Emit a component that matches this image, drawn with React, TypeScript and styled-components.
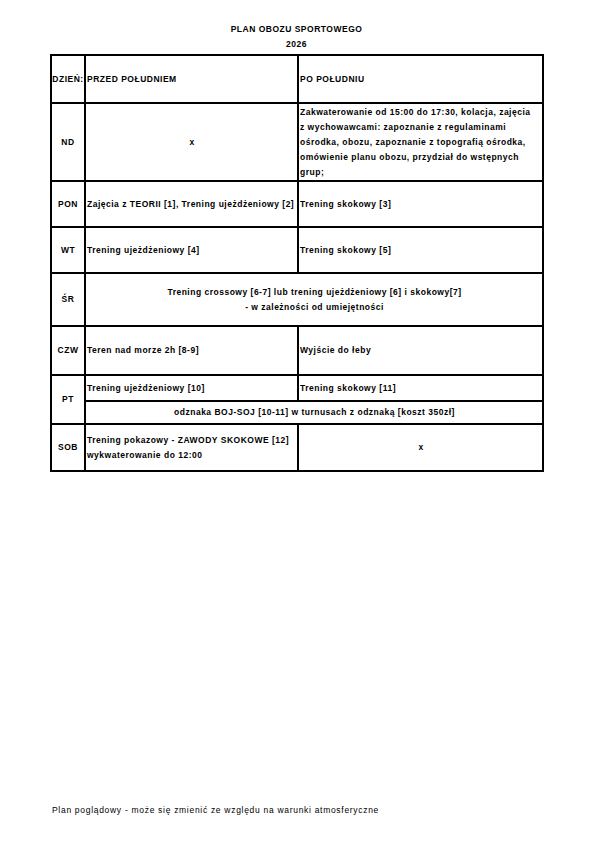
import React from "react";
import styled, {createGlobalStyle} from "styled-components";

const GlobalStyle = createGlobalStyle`
    html, body {
        margin: 0;
        padding: 0;
        background: #ffffff;
    }
`

type Align = "left" | "center";

const Page = () => {
    return <Sheet>
        <GlobalStyle />
        <TitleBlock>
            <TitleLine>PLAN OBOZU SPORTOWEGO</TitleLine>
            <TitleLine>2026</TitleLine>
        </TitleBlock>
        <Table>
            <colgroup>
                <col style={{width: 34}} />
                <col style={{width: 213}} />
                <col style={{width: 245}} />
            </colgroup>
            <tbody>
                <Row h={48}>
                    <DayCell>DZIEŃ:</DayCell>
                    <Cell>PRZED POŁUDNIEM</Cell>
                    <Cell>PO POŁUDNIU</Cell>
                </Row>
                <Row h={78}>
                    <DayCell>ND</DayCell>
                    <Cell align="center">x</Cell>
                    <Cell>
                        Zakwaterowanie od 15:00 do 17:30, kolacja, zajęcia<br />
                        z wychowawcami: zapoznanie z regulaminami<br />
                        ośrodka, obozu, zapoznanie z topografią ośrodka,<br />
                        omówienie planu obozu, przydział do wstępnych<br />
                        grup;
                    </Cell>
                </Row>
                <Row h={46}>
                    <DayCell>PON</DayCell>
                    <Cell>Zajęcia z TEORII [1], Trening ujeżdżeniowy [2]</Cell>
                    <Cell>Trening skokowy [3]</Cell>
                </Row>
                <Row h={46}>
                    <DayCell>WT</DayCell>
                    <Cell>Trening ujeżdżeniowy [4]</Cell>
                    <Cell>Trening skokowy [5]</Cell>
                </Row>
                <Row h={53}>
                    <DayCell>ŚR</DayCell>
                    <Cell colSpan={2} align="center">
                        Trening crossowy [6-7] lub trening ujeżdżeniowy [6] i skokowy[7]<br />
                        - w zależności od umiejętności
                    </Cell>
                </Row>
                <Row h={49}>
                    <DayCell>CZW</DayCell>
                    <Cell>Teren nad morze 2h [8-9]</Cell>
                    <Cell>Wyjście do łeby</Cell>
                </Row>
                <Row h={26}>
                    <DayCell rowSpan={2}>PT</DayCell>
                    <Cell>Trening ujeżdżeniowy [10]</Cell>
                    <Cell>Trening skokowy [11]</Cell>
                </Row>
                <Row h={23}>
                    <Cell colSpan={2} align="center">
                        odznaka BOJ-SOJ [10-11] w turnusach z odznaką [koszt 350zł]
                    </Cell>
                </Row>
                <Row h={47}>
                    <DayCell>SOB</DayCell>
                    <Cell>
                        Trening pokazowy - ZAWODY SKOKOWE [12]<br />
                        wykwaterowanie do 12:00
                    </Cell>
                    <Cell align="center">x</Cell>
                </Row>
            </tbody>
        </Table>
        <Footer>Plan poglądowy - może się zmienić ze względu na warunki atmosferyczne</Footer>
    </Sheet>
}

export default function App() {
    return <Page />
}

const Sheet = styled.div `
    width: 595px;
    height: 842px;
    box-sizing: border-box;
    display: flex;
    flex-direction: column;
    padding: 22px 0 26px 50px;
    font-family: "Liberation Sans", Arial, sans-serif;
    color: #000;
`

const TitleBlock = styled.div `
    width: 493px;
    display: flex;
    flex-direction: column;
    align-items: center;
    margin-bottom: 2px;
`

const TitleLine = styled.div `
    font-size: 8.5px;
    font-weight: 700;
    letter-spacing: 0.5px;
    line-height: 15px;
    white-space: nowrap;
`

const Table = styled.table `
    width: 493px;
    table-layout: fixed;
    border-collapse: collapse;
    border: 2px solid #000;
`

const Row = styled.tr < {
    h: number
} > `
    height: ${props => props.h}px;
`

const Cell = styled.td < {
    align?: Align
} > `
    border: 2px solid #000;
    padding: 0 0 0 1px;
    font-size: 8.5px;
    font-weight: 700;
    letter-spacing: 0.5px;
    line-height: 15px;
    white-space: nowrap;
    vertical-align: middle;
    text-align: ${props => props.align ?? "left"};
`

const DayCell = styled(Cell) `
    text-align: center;
    padding: 0;
`

const Footer = styled.div `
    margin-top: auto;
    padding-left: 2px;
    font-size: 8.5px;
    font-weight: 400;
    letter-spacing: 0.7px;
    line-height: 12px;
    white-space: nowrap;
`
